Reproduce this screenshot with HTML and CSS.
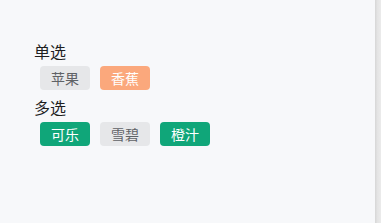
FILE: index.html
```html
<!DOCTYPE html>
<html lang="zh">
<head>
<meta charset="utf-8">
<link rel="stylesheet" href="styles.css">
</head>
<body>
<div class="page">
  <main class="content">
    <div class="group">
      <div class="label">单选</div>
      <div class="tags">
        <span class="tag">苹果</span>
        <span class="tag tag-orange">香蕉</span>
      </div>
    </div>
    <div class="group">
      <div class="label">多选</div>
      <div class="tags">
        <span class="tag tag-green">可乐</span>
        <span class="tag">雪碧</span>
        <span class="tag tag-green">橙汁</span>
      </div>
    </div>
  </main>
  <div class="edge"></div>
</div>
</body>
</html>
```
FILE: styles.css
```css
html, body {
  margin: 0;
  padding: 0;
  height: 100%;
}
body {
  background: #f7f8fa;
  font-family: "Noto Sans CJK SC", "Noto Sans", sans-serif;
}
.page {
  display: flex;
  height: 100%;
}
.content {
  flex: 1;
  padding: 40px 0 0 34px;
}
.group {
  display: flex;
  flex-direction: column;
  margin-bottom: 6px;
}
.label {
  font-size: 16px;
  line-height: 22px;
  color: #1f1f1f;
}
.tags {
  display: flex;
  gap: 10px;
  margin-top: 4px;
  margin-left: 6px;
}
.tag {
  width: 50px;
  height: 24px;
  border-radius: 4px;
  display: inline-flex;
  align-items: center;
  justify-content: center;
  font-size: 14px;
  background: #e6e7e9;
  color: #5f6266;
}
.tag-orange {
  background: #fba87c;
  color: #fff;
}
.tag-green {
  background: #10a679;
  color: #fff;
}
.edge {
  width: 6px;
  background: linear-gradient(to right, #d6d6d6, #e4e4e4 40%, #ebebeb);
}
```
